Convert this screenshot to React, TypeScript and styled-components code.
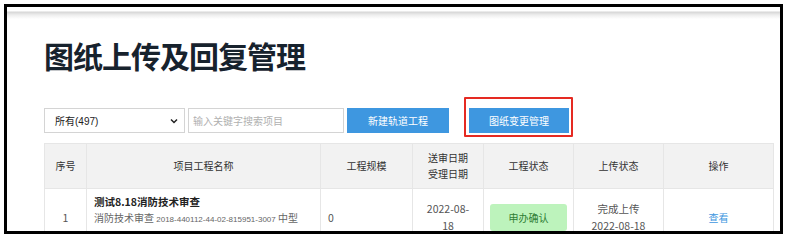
import styled, { createGlobalStyle } from 'styled-components'

const GlobalStyle = createGlobalStyle`
  html, body {
    margin: 0;
    padding: 0;
    background: #fff;
  }
  body {
    font-family: "Noto Sans CJK SC", "Liberation Sans", sans-serif;
    color: #333;
  }
`

const Frame = styled.div`
  box-sizing: border-box;
  margin: 4px 0 0 4px;
  width: 779px;
  height: 230px;
  border: 3px solid #000;
  overflow: hidden;
  background: #fff;
`

const TopShade = styled.div`
  height: 12px;
  background: linear-gradient(to bottom, #fff 0, #fff 4px, #d6d6d6 5px, #eeeeee 8px, #fff 12px);
`

const Content = styled.div`
  padding-left: 37px;
`

const Title = styled.h1`
  margin: 16px 0 0;
  font-size: 30px;
  line-height: 40px;
  font-weight: 700;
  color: #17222d;
  letter-spacing: -1px;
`

const Toolbar = styled.div`
  display: flex;
  align-items: center;
  margin-top: 33px;
  height: 25px;
  font-size: 10px;
`

const SelectBox = styled.div`
  box-sizing: border-box;
  display: flex;
  align-items: center;
  justify-content: space-between;
  width: 141px;
  height: 25px;
  padding: 0 6px 0 10px;
  border: 1px solid #d4d4d4;
  color: #222;
  font-family: "Liberation Sans", "Noto Sans CJK SC", sans-serif;
`

const SearchInput = styled.div`
  box-sizing: border-box;
  display: flex;
  align-items: center;
  width: 156px;
  height: 25px;
  margin-left: 3px;
  padding-left: 4px;
  border: 1px solid #d4d4d4;
  color: #b0b0b0;
`

const Button = styled.div<{ $gap: number; $width: number }>`
  position: relative;
  box-sizing: border-box;
  display: flex;
  align-items: center;
  justify-content: center;
  width: ${p => p.$width}px;
  height: 25px;
  margin-left: ${p => p.$gap}px;
  background: #3e97e0;
  color: #fff;
`

const Highlight = styled.span`
  position: absolute;
  left: -5px;
  right: -4px;
  top: -11px;
  bottom: -4px;
  border: 2px solid #e52a22;
  border-radius: 1px;
  pointer-events: none;
`

const Table = styled.table`
  margin-top: 10px;
  width: 729px;
  border-collapse: collapse;
  table-layout: fixed;
  font-size: 10px;
`

const Col = styled.col<{ $w: number }>`
  width: ${p => p.$w}px;
`

const Th = styled.th`
  height: 44px;
  padding: 0;
  background: #f2f2f2;
  border: 1px solid #e6e6e6;
  font-weight: 400;
  color: #333;
  line-height: 16px;
  text-align: center;
`

const Td = styled.td<{ $align?: string }>`
  height: 52px;
  padding: 0 7px;
  border: 1px solid #e6e6e6;
  text-align: ${p => p.$align || 'center'};
  color: #555;
  font-size: 10.5px;
  line-height: 17px;
  vertical-align: middle;
  white-space: nowrap;
  overflow: hidden;
`

const NameCell = styled(Td)`
  vertical-align: top;
  padding-top: 4px;
  text-align: left;
`

const NameMain = styled.div`
  font-size: 10.5px;
  font-weight: 700;
  color: #222;
`

const NameSub = styled.div`
  color: #666;
  font-size: 10px;
  line-height: 16px;
  small {
    font-size: 8px;
    font-family: "Liberation Sans", sans-serif;
  }
`

const StatusCell = styled(Td)`
  padding: 0;
`

const Badge = styled.div`
  display: flex;
  align-items: center;
  justify-content: center;
  height: 27px;
  margin: 0 6px;
  border-radius: 3px;
  background: #bdf3bc;
  color: #2f7d34;
  font-size: 10px;
`

const ViewLink = styled.a`
  color: #3e97e0;
  font-size: 10px;
  text-decoration: none;
`

const columns = [
  { label: '序号', w: 42 },
  { label: '项目工程名称', w: 234 },
  { label: '工程规模', w: 92 },
  { label: '送审日期\n受理日期', w: 71 },
  { label: '工程状态', w: 90 },
  { label: '上传状态', w: 90 },
  { label: '操作', w: 110 },
]

export default function App() {
  return (
    <>
      <GlobalStyle />
      <Frame>
        <TopShade />
        <Content>
          <Title>图纸上传及回复管理</Title>
          <Toolbar>
            <SelectBox>
              <span>所有(497)</span>
              <svg width="8" height="6" viewBox="0 0 8 6">
                <path d="M1 1.5l3 3 3-3" fill="none" stroke="#222" strokeWidth="1.5" />
              </svg>
            </SelectBox>
            <SearchInput>输入关键字搜索项目</SearchInput>
            <Button $gap={3} $width={102}>新建轨道工程</Button>
            <Button $gap={20} $width={100}>
              图纸变更管理
              <Highlight />
            </Button>
          </Toolbar>
          <Table>
            <colgroup>
              {columns.map(c => (
                <Col key={c.label} $w={c.w} />
              ))}
            </colgroup>
            <thead>
              <tr>
                {columns.map(c => (
                  <Th key={c.label}>
                    {c.label.split('\n').map(line => (
                      <div key={line}>{line}</div>
                    ))}
                  </Th>
                ))}
              </tr>
            </thead>
            <tbody>
              <tr>
                <Td>1</Td>
                <NameCell>
                  <NameMain>测试8.18消防技术审查</NameMain>
                  <NameSub>
                    消防技术审查 <small>2018-440112-44-02-815951-3007</small> 中型
                  </NameSub>
                </NameCell>
                <Td $align="left">0</Td>
                <Td>
                  2022-08-
                  <br />
                  18
                </Td>
                <StatusCell>
                  <Badge>申办确认</Badge>
                </StatusCell>
                <Td>
                  完成上传
                  <br />
                  2022-08-18
                </Td>
                <Td>
                  <ViewLink href="#">查看</ViewLink>
                </Td>
              </tr>
            </tbody>
          </Table>
        </Content>
      </Frame>
    </>
  )
}
